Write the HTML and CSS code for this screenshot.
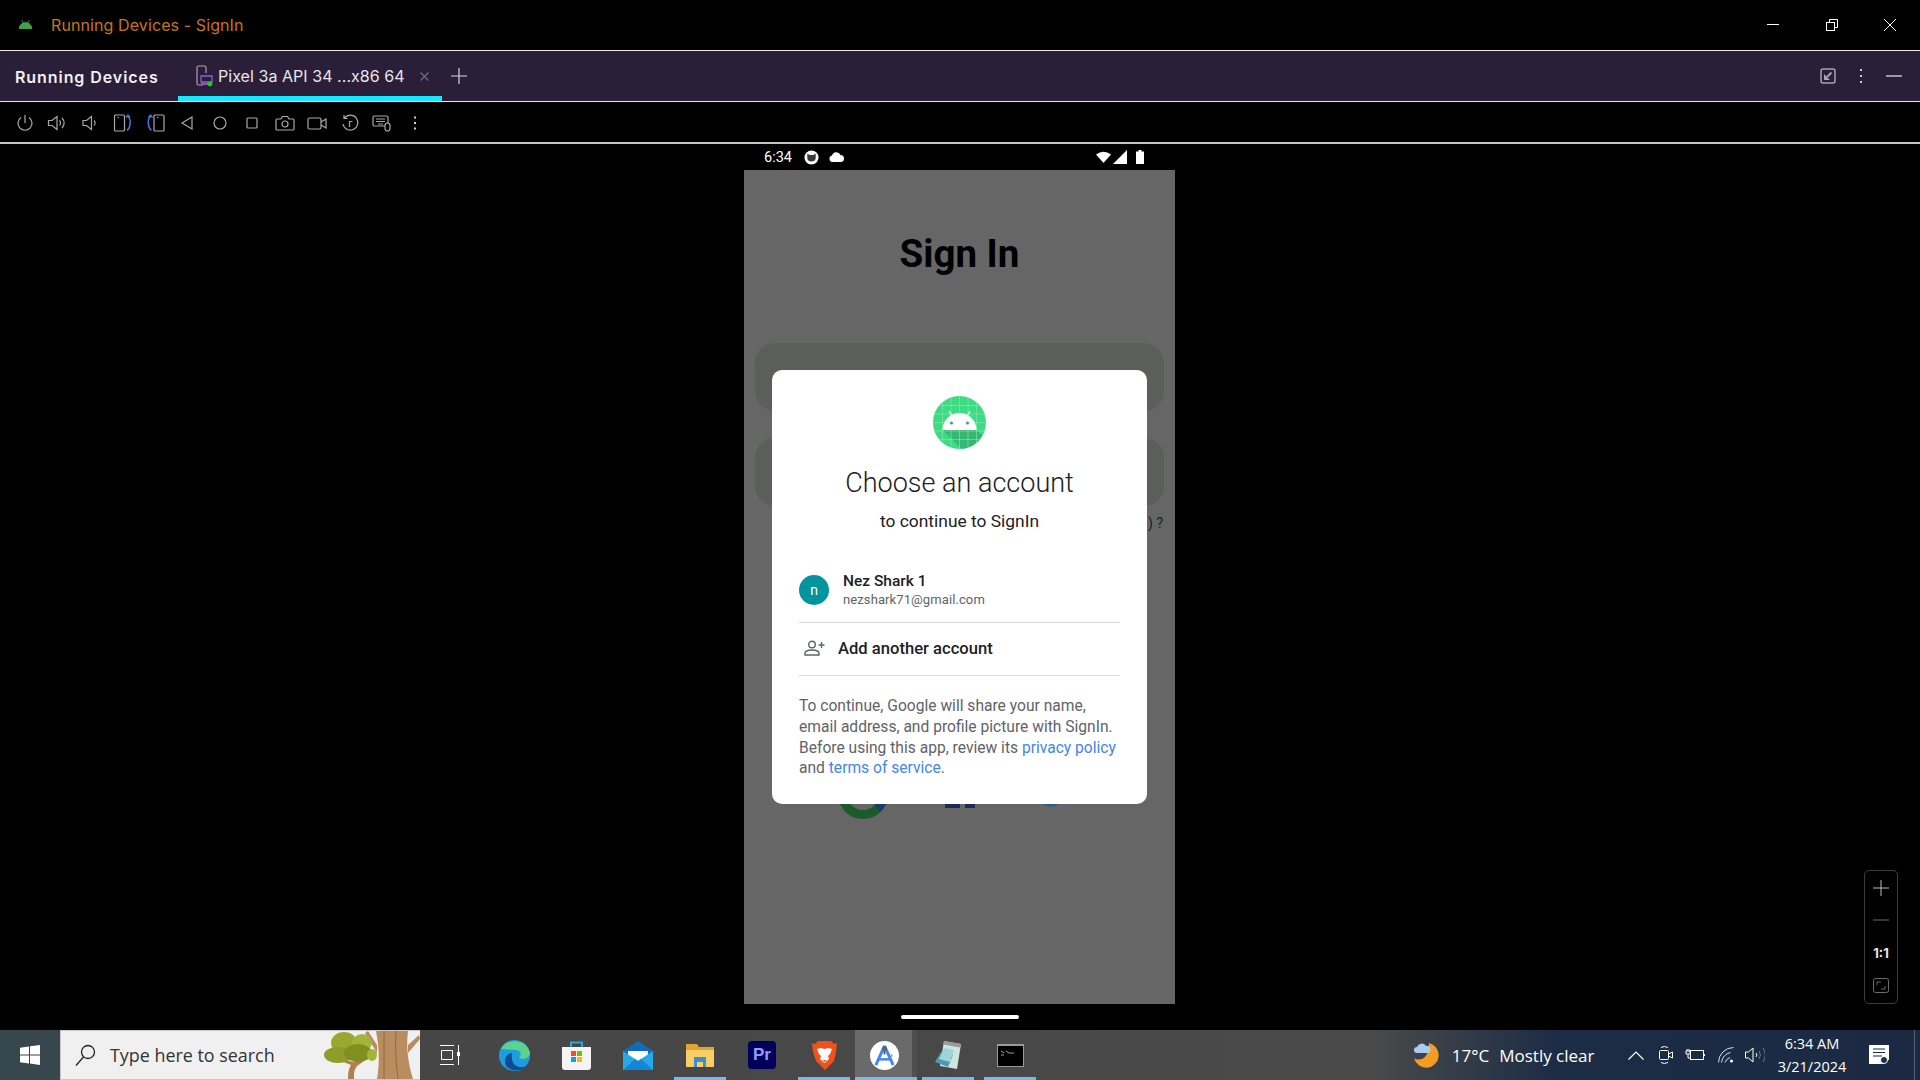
FILE: index.html
```html
<!DOCTYPE html>
<html lang="en">
<head>
  <meta charset="UTF-8">
  <title>Running Devices - SignIn</title>
  <link rel="stylesheet" href="styles.css">
</head>
<body>
  <!-- window title -->
  <header class="titlebar">
    <svg class="droid" width="13" height="9" viewBox="0 0 13 9"><path d="M0 9a6.5 6.5 0 0 1 13 0z M2.5 0l2 3 M10.5 0l-2 3" fill="#3ea447" stroke="#3ea447" stroke-width=".8"/></svg>
    <span class="title-text">Running Devices - SignIn</span>
    <div class="win-btns">
      <svg width="12" height="12" viewBox="0 0 12 12"><path d="M0 5.5h12" stroke="#fff"/></svg>
      <svg width="12" height="12" viewBox="0 0 12 12" fill="none" stroke="#fff"><rect x=".5" y="3.5" width="8" height="8"/><path d="M3.5 3.5v-3h8v8h-3"/></svg>
      <svg width="12" height="12" viewBox="0 0 12 12"><path d="M0 0l12 12M12 0L0 12" stroke="#fff"/></svg>
    </div>
  </header>

  <!-- tool window tabs -->
  <nav class="tabbar">
    <span class="tool-name">Running Devices</span>
    <div class="tab">
      <svg width="17" height="22" viewBox="0 0 17 22" fill="none"><path d="M7 20H2.5A1.5 1.5 0 0 1 1 18.5v-16A1.5 1.5 0 0 1 2.5 1h6A1.5 1.5 0 0 1 10 2.500V8" stroke="#a9a4b2" stroke-width="1.200"/><path d="M5 11h11v6H5z" stroke="#9a5cd0" stroke-width="1.300"/><path d="M5 19h9" stroke="#9a5cd0" stroke-width="1.800"/><circle cx="14" cy="19" r="2.400" fill="#19d11f"/></svg>
      <span class="tab-label">Pixel 3a API 34 ...x86 64</span>
      <svg class="tab-close" width="9" height="9" viewBox="0 0 9 9"><path d="M.5.500l8 8M8.500.500l-8 8" stroke="#77717f" stroke-width="1.100"/></svg>
    </div>
    <svg class="tab-add" width="16" height="16" viewBox="0 0 16 16"><path d="M8 0v16M0 8h16" stroke="#d8d5dc" stroke-width="1.200"/></svg>
    <div class="tab-tools">
      <svg width="16" height="16" viewBox="0 0 16 16" fill="none" stroke="#a8a3ae"><rect x="1" y="1" width="14" height="14" rx="2" stroke-width="1.500"/><path d="M11.500 4.500L7 9" stroke-width="2"/><path d="M4 6v6h6z" fill="#a8a3ae" stroke="none"/></svg>
      <svg width="4" height="16" viewBox="0 0 4 16" fill="#c9c5ce"><rect x="1" y="1" width="2" height="2"/><rect x="1" y="7" width="2" height="2"/><rect x="1" y="13" width="2" height="2"/></svg>
      <svg width="16" height="2" viewBox="0 0 16 2"><path d="M0 1h16" stroke="#9f99a6" stroke-width="2"/></svg>
    </div>
  </nav>

  <!-- emulator toolbar -->
  <div class="toolbar">
    <svg class="tool" viewBox="0 0 20 20"><path d="M10 2v8M6 4.500a7 7 0 1 0 8 0"/></svg>
    <svg class="tool" viewBox="0 0 20 20"><path d="M1.500 7.500h3.500L10 3.500v13l-5-4H1.500zM12.500 7.500a3.500 3.500 0 0 1 0 5M15 5a7 7 0 0 1 0 10"/></svg>
    <svg class="tool" viewBox="0 0 20 20"><path d="M3 7.500h3.500l5-4v13l-5-4H3zM14 7.500a3.500 3.500 0 0 1 0 5"/></svg>
    <svg class="tool" viewBox="0 0 20 20"><rect x="2.500" y="2" width="10" height="16" rx="1"/><path d="M5.500 4.500H7"/><path class="blue" d="M15.500 3a8 8 0 0 1 2.500 8 8 8 0 0 1-3 6.500M14 4.500L16 2l2 2.500"/></svg>
    <svg class="tool" viewBox="0 0 20 20"><rect x="9" y="2" width="10" height="16" rx="1"/><path d="M12 4.500h1.500"/><path class="blue" d="M6 3a8 8 0 0 0-2.500 8 8 8 0 0 0 3 6.500M7.500 4.500L5.500 2l-2 2.500"/></svg>
    <svg class="tool" viewBox="0 0 20 20"><path d="M15 4v12L5 10z"/></svg>
    <svg class="tool" viewBox="0 0 20 20"><circle cx="10" cy="10" r="6"/></svg>
    <svg class="tool" viewBox="0 0 20 20"><rect x="5" y="5" width="10" height="10" rx="1"/></svg>
    <svg class="tool" viewBox="0 0 20 20"><path d="M2 6h4l1.500-2.500h5L14 6h4a1 1 0 0 1 1 1v9a1 1 0 0 1-1 1H2a1 1 0 0 1-1-1V7a1 1 0 0 1 1-1z"/><circle cx="10" cy="11" r="3"/></svg>
    <svg class="tool" viewBox="0 0 20 20"><rect x="1" y="5" width="13" height="11" rx="1.500"/><path d="M14 9l5-3v9l-5-3"/></svg>
    <svg class="tool" viewBox="0 0 20 20"><path d="M4.500 5A7.500 7.500 0 1 1 3 11M4 2v3.500h3.500"/><path d="M12.500 8.500h-3V14"/></svg>
    <svg class="tool" viewBox="0 0 20 20"><rect x="1" y="3" width="15" height="10" rx="1.500"/><path d="M4 6h9M4 8.500h9M6 11h5"/><rect x="13" y="10" width="5" height="8" rx="2.500" fill="#000"/></svg>
    <svg class="tool dots" viewBox="0 0 20 20"><path d="M10 3.500v2M10 9v2M10 14.500v2"/></svg>
  </div>

  <!-- device view -->
  <main class="stage">
    <div class="statusbar">
      <span class="clock">6:34</span>
      <svg class="st-cat" width="15" height="15" viewBox="0 0 15 15"><circle cx="7.500" cy="7.500" r="6.300" fill="#fff" stroke="#fff" stroke-width="1.500"/><path d="M3.300 3.500l2.200 1.500h4l2.200-1.500v4.500c0 2.500-2 3.500-4.200 3.500s-4.200-1-4.200-3.500z" fill="#3a3a3a"/></svg>
      <svg width="15" height="10" viewBox="0 0 15 10"><path d="M3.500 10a3.300 3.300 0 0 1-.500-6.500A4.500 4.500 0 0 1 11.500 3 3.500 3.500 0 0 1 11.500 10z" fill="#fff"/></svg>
      <div class="st-right">
        <svg width="15" height="12" viewBox="0 0 15 12"><path d="M0 3.500Q7.500-2 15 3.500L7.500 12z" fill="#fff"/></svg>
        <svg width="14" height="14" viewBox="0 0 14 14"><path d="M14 0v14H0z" fill="#fff"/></svg>
        <svg width="8" height="14" viewBox="0 0 8 14"><path d="M2.500 0h3v1.500H8V14H0V1.500h2.500z" fill="#fff"/></svg>
      </div>
    </div>

    <div class="screen">
      <h1 class="signin-title">Sign In</h1>
      <div class="field"></div>
      <div class="field"></div>
      <p class="forgot">) ?</p>
      <div class="socials">
        <svg width="50" height="50" viewBox="0 0 50 50" fill="none"><circle cx="25" cy="25" r="20.500" stroke="#1b5a2b" stroke-width="9"/><path d="M39.500 39.500A20.500 20.500 0 0 0 45.500 25" stroke="#1d3a6e" stroke-width="9"/></svg>
        <svg width="30" height="30" viewBox="0 0 30 30" fill="#1c2c59"><rect x="0" width="15" height="30"/><rect x="20" width="10" height="30"/></svg>
        <svg width="28" height="28" viewBox="0 0 28 28"><circle cx="14" cy="14" r="13.500" fill="#2a5e8a"/></svg>
      </div>

      <!-- account picker on top of the page -->
      <section class="dialog">
        <svg class="logo" width="53" height="53" viewBox="0 0 53 53">
          <defs><clipPath id="disc"><circle cx="26.500" cy="26.500" r="26.500"/></clipPath></defs>
          <g clip-path="url(#disc)">
            <rect width="53" height="53" fill="#3ddc84"/>
            <path d="M9.500 34h34L53 43v10H29z" fill="#35b873"/>
            <path d="M9.500 0v53M18 0v53M26.500 0v53M35 0v53M43.500 0v53M0 9.500h53M0 18h53M0 26.500h53M0 35h53M0 43.500h53" stroke="#8beab4" stroke-width=".6"/>
          </g>
          <path d="M9.500 34a17 17 0 0 1 34 0z" fill="#fff"/>
          <path d="M16 15l4 7M37 15l-4 7" stroke="#fff" stroke-width="1.200"/>
          <circle cx="18.500" cy="27" r="1.500" fill="#2fa866"/><circle cx="34.500" cy="27" r="1.500" fill="#2fa866"/>
        </svg>
        <h2 class="dlg-title">Choose an account</h2>
        <p class="dlg-sub">to continue to SignIn</p>
        <div class="account">
          <span class="avatar">n</span>
          <div class="acc-info">
            <span class="acc-name">Nez Shark 1</span>
            <span class="acc-mail">nezshark71@gmail.com</span>
          </div>
        </div>
        <div class="add-row">
          <svg width="21" height="16" viewBox="0 0 21 16" fill="none" stroke="#5f6368" stroke-width="1.400"><circle cx="8" cy="4.500" r="3.300"/><path d="M1 15v-1.500c0-2.500 4-3.500 7-3.500s7 1 7 3.500V15z"/><path d="M17.500 2v6M14.500 5h6"/></svg>
          <span>Add another account</span>
        </div>
        <p class="legal">To continue, Google will share your name, email address, and profile picture with SignIn. Before using this app, review its <a>privacy policy</a> and <a>terms of service</a>.</p>
      </section>
    </div>

    <div class="home-area"><span class="home-pill"></span></div>

    <div class="zoom-ctrl">
      <svg width="16" height="16" viewBox="0 0 16 16"><path d="M8 0v16M0 8h16" stroke="#bdbdbd"/></svg>
      <svg class="zoom-minus" width="16" height="2" viewBox="0 0 16 2"><path d="M0 1h16" stroke="#6c6c6c"/></svg>
      <span class="zoom-one">1:1</span>
      <svg class="zoom-fit" width="16" height="15" viewBox="0 0 16 15" fill="none" stroke="#6b6b6b"><rect x=".5" y=".5" width="15" height="14" rx="2"/><path d="M4 7V4h4M12 8v3H8"/></svg>
    </div>
  </main>

  <!-- windows taskbar -->
  <footer class="taskbar">
    <div class="start">
      <svg width="20" height="20" viewBox="0 0 20 20" fill="#fff"><path d="M0 2.800l9-1.300v8H0zM10 1.300L20 0v9.500H10zM0 10.500h9v8l-9-1.300zM10 10.500h10V20l-10-1.400z"/></svg>
    </div>
    <div class="search">
      <svg width="21" height="23" viewBox="0 0 21 23" fill="none" stroke="#222" stroke-width="1.300"><circle cx="13" cy="8" r="6.500"/><path d="M8.500 13L1 21.500"/></svg>
      <span class="search-text">Type here to search</span>
      <svg class="search-art" width="96" height="48" viewBox="0 0 96 48">
        <path d="M24 48c0-8 1-10 3-14L12 28l1-2 16 5 8-5 6 2-10 7c-3 4-3 7-3 13z" fill="#b08050"/>
        <path d="M52 0h32c-2 16 0 32 5 48H53c3-16 2-32-1-48z" fill="#b98d5f"/>
        <path d="M44 0l9 14v8L41 2zM96 8L84 22v-8l11-10z" fill="#b98d5f"/>
        <path d="M60 0v48M72 0c-1 16 0 32 2 48" stroke="#96693f" fill="none"/>
        <ellipse cx="20" cy="12" rx="13" ry="11" fill="#9aa832"/>
        <ellipse cx="38" cy="12" rx="10" ry="9" fill="#a3b43a"/>
        <ellipse cx="14" cy="24" rx="14" ry="8" fill="#8e9d28"/>
        <ellipse cx="34" cy="22" rx="14" ry="9" fill="#7f8f20"/>
        <ellipse cx="48" cy="24" rx="5" ry="6" fill="#a5b43a"/>
      </svg>
    </div>
    <div class="task-view">
      <svg width="20" height="20" viewBox="0 0 20 20" fill="none" stroke="#fff"><path d="M0 .500h14M0 19.500h14M1.500 5.500h11v9h-11zM18.500 0v7M18.500 11v9"/><rect x="17" y="7" width="3" height="4" fill="#fff" stroke="none"/></svg>
    </div>
    <div class="app">
      <svg width="31" height="31" viewBox="0 0 31 31"><circle cx="15.500" cy="15.500" r="15.500" fill="#1b9de2"/><path d="M2 9C7-2 28-2 31 13c0 5-7 7-11 5 3-3 2-8-4-8C10 10 5 9 2 9z" fill="#5cd38b"/><path d="M13 13c-7 1-9 9-5 14 6 5 15 4 20-1-8 3-17 0-15-13z" fill="#134b92"/></svg>
    </div>
    <div class="app">
      <svg width="29" height="30" viewBox="0 0 29 30"><path d="M9 7V2.500h11V7" fill="none" stroke="#2aa5e5" stroke-width="2"/><path d="M0 7h29v20a3 3 0 0 1-3 3H3a3 3 0 0 1-3-3z" fill="#f4f4f4"/><rect x="9" y="11" width="5" height="5" fill="#f25022"/><rect x="15" y="11" width="5" height="5" fill="#7fba00"/><rect x="9" y="17" width="5" height="5" fill="#00a4ef"/><rect x="15" y="17" width="5" height="5" fill="#ffb900"/></svg>
    </div>
    <div class="app">
      <svg width="30" height="29" viewBox="0 0 30 29"><path d="M0 10L15 0l15 10v19H0z" fill="#0f6cbd"/><path d="M5 10h20v6l-10 6-10-6z" fill="#fff"/><path d="M0 10l15 10 15-10v19H0z" fill="#27a9e8"/><path d="M0 29l12-11 3 2 3-2 12 11z" fill="#1487d2"/></svg>
    </div>
    <div class="app open">
      <svg width="28" height="24" viewBox="0 0 28 24"><path d="M0 1h11l2 3h15v19H0z" fill="#e0a530"/><path d="M0 7h28v16a1 1 0 0 1-1 1H1a1 1 0 0 1-1-1z" fill="#f8cf66"/><path d="M8 14h12v10h-3v-5h-6v5H8z" fill="#3f8ed4"/></svg>
    </div>
    <div class="app">
      <span class="pr-icon">Pr</span>
    </div>
    <div class="app open">
      <svg width="25" height="29" viewBox="0 0 25 29"><path d="M6 0h13l3 3 3-1-1 9-2 9-9 9-9-9-3-9-1-9 3 1z" fill="#f1511b"/><path d="M5 8l4-1 3.500 1L16 7l4 1-2 5-2 2 1 3-4.500 4L8 18l1-3-2-2z" fill="#fff"/><path d="M10.500 19h4l-2 2z" fill="#f1511b"/></svg>
    </div>
    <div class="app studio open">
      <svg width="29" height="29" viewBox="0 0 30 30" fill="none"><circle cx="15" cy="15" r="15" fill="#fff"/><path d="M15 5L6 25M15 5l9 20" stroke="#4285f4" stroke-width="3"/><path d="M9 19h12" stroke="#4285f4" stroke-width="2.500"/><path d="M15 5v9" stroke="#5f6368" stroke-width="2"/><circle cx="15" cy="8" r="2.500" fill="#5f6368"/><path d="M21 13l3 2-2 2z" fill="#3ddc84"/></svg>
    </div>
    <div class="app open">
      <svg width="26" height="28" viewBox="0 0 26 28"><path d="M9 0l17 3-4 25L5 25z" fill="#cfe5df"/><path d="M9 0l17 3-.6 3.500L8.300 3.500z" fill="#9a9a9a"/><path d="M6 11l12 3-5 12-13-5z" fill="#4c9bb0"/><path d="M9 7l10 2-4 12L4 18z" fill="#9ed5d8"/></svg>
    </div>
    <div class="app open">
      <div class="term-icon"><svg width="14" height="8" viewBox="0 0 14 8" fill="none" stroke="#ccc" stroke-width=".8"><path d="M0 1l3 2M5 1l3 2 5 0M0 5h3"/></svg></div>
    </div>

    <div class="tray">
      <svg class="weather" width="28" height="26" viewBox="0 0 28 26"><path d="M16 1a12.500 12.500 0 1 1-15 15c6 4 15 1 15-15z" fill="#f39c1f"/><path d="M4 11a3 3 0 0 1 0-6 5 5 0 0 1 9-1 3.500 3.500 0 0 1 2 7z" fill="#a9cdee"/></svg>
      <span class="temp">17°C</span>
      <span class="cond">Mostly clear</span>
      <svg class="chev" width="16" height="9" viewBox="0 0 16 9" fill="none" stroke="#fff" stroke-width="1.200"><path d="M.5 8.500L8 1l7.500 7.500"/></svg>
      <svg class="tr-meet" width="14" height="20" viewBox="0 0 14 20" fill="none" stroke="#fff"><path d="M2 2.500Q5 .500 9 2.500M2 17.500q3 2 7 0"/><rect x=".5" y="5.500" width="9" height="9" rx="1"/><path d="M9.500 9l4-2v6l-4-2"/></svg>
      <svg class="tr-batt" width="20" height="14" viewBox="0 0 20 14" fill="none" stroke="#fff"><rect x="5.500" y="2.500" width="13" height="9" /><path d="M19.500 6v2M2 1v2M4 1v2M1 3h4v3H1zM3 6v4h3"/></svg>
      <svg class="tr-wifi" width="16" height="16" viewBox="0 0 16 16" fill="none" stroke="#ddd"><path d="M.500 15.500a15 15 0 0 1 15-15M3.500 15.500a12 12 0 0 1 9-10M7 15.500a8 8 0 0 1 5-5"/><circle cx="13.500" cy="14" r="1.500" fill="#fff" stroke="none"/></svg>
      <svg class="tr-vol" width="20" height="16" viewBox="0 0 20 16" fill="none" stroke="#fff"><path d="M.500 5h3L8 1v14l-4.500-4H.500zM11 6a3 3 0 0 1 0 4"/><path d="M14 4a7 7 0 0 1 0 8M18 1a12 12 0 0 1 0 14" stroke="#777"/></svg>
      <div class="datetime"><span>6:34 AM</span><span>3/21/2024</span></div>
      <svg class="notif" width="20" height="20" viewBox="0 0 20 20"><path d="M0 0h20v15h-4l-2 4H0z" fill="#fff"/><path d="M4 4h12M4 7.500h12M4 11h9" stroke="#1c2b44" stroke-width="1.200"/><circle cx="15" cy="15" r="3.500" fill="#1c2b44" stroke="#fff"/></svg>
      <span class="show-desktop"></span>
    </div>
  </footer>
</body>
</html>
```

FILE: styles.css
```css
* {
  box-sizing: border-box;
}
body {
  margin: 0;
  width: 1920px;
  height: 1080px;
  overflow: hidden;
  display: flex;
  flex-direction: column;
  background-color: #000;
  font-family: Inter, sans-serif;
  color: #fff;
}
svg {
  display: block;
  flex-shrink: 0;
}

/* title bar */
.titlebar {
  height: 51px;
  display: flex;
  align-items: center;
  padding-left: 19px;
  padding-bottom: 1px;
  border-bottom: 1px solid #e8e8e8;
}
.title-text {
  margin-left: 19px;
  font-size: 16px;
  color: #c9741a;
  letter-spacing: 0.1px;
}
.win-btns {
  margin-left: auto;
  margin-right: 24px;
  display: flex;
  gap: 46.500px;
}

/* tabs */
.tabbar {
  height: 51px;
  display: flex;
  align-items: center;
  padding-left: 15px;
  background-color: #2b1e38;
  border-bottom: 1px solid #e8e8e8;
}
.tool-name {
  width: 163px;
  margin-top: 2px;
  font-size: 16px;
  font-weight: 600;
  letter-spacing: 0.93px;
  color: #f2f0f4;
}
.tab {
  width: 264px;
  height: 50px;
  display: flex;
  align-items: center;
  padding-left: 18px;
  padding-top: 5px;
  border-bottom: 5px solid #18e6ff;
}
.tab-label {
  margin-left: 5px;
  font-size: 16px;
  letter-spacing: 0.05px;
  color: #e8e5ec;
}
.tab-close {
  margin-left: 15px;
}
.tab-add {
  margin-left: 9px;
  margin-top: 0;
}
.tab-tools {
  margin-left: auto;
  margin-right: 18px;
  display: flex;
  align-items: center;
  gap: 23px;
}

/* emulator toolbar */
.toolbar {
  height: 42px;
  display: flex;
  align-items: center;
  gap: 12.5px;
  padding-left: 14.5px;
  padding-top: 2px;
  border-bottom: 2px solid #c4c4c4;
}
.tool {
  width: 20px;
  height: 20px;
  fill: none;
  stroke: #a9a9a9;
  stroke-width: 1.2;
}
.tool .blue {
  stroke: #3f7fe0;
  stroke-width: 1.4;
}
.tool.dots {
  stroke: #cfcfcf;
  stroke-width: 2;
}

/* device */
.stage {
  position: relative;
  flex: 1;
  display: flex;
  flex-direction: column;
  align-items: center;
  padding-right: 1px;
}
.statusbar {
  width: 431px;
  height: 26px;
  display: flex;
  align-items: center;
  gap: 10px;
  padding: 0 31px 0 20px;
  font-family: Roboto, sans-serif;
}
.clock {
  font-size: 14.500px;
  margin-right: 2px;
}
.st-right {
  margin-left: auto;
  display: flex;
  align-items: center;
  gap: 2px;
}
.st-right svg:last-child {
  margin-left: 7px;
}
.screen {
  position: relative;
  width: 431px;
  height: 834px;
  padding: 0 11px;
  background-color: #666;
  display: flex;
  flex-direction: column;
  align-items: center;
  font-family: Roboto, sans-serif;
}
.signin-title {
  margin: 61px 0 66px;
  height: 46px;
  line-height: 46px;
  font-size: 38.500px;
  font-weight: 700;
  color: #000;
}
.field {
  width: 100%;
  height: 68px;
  margin-bottom: 27px;
  flex-shrink: 0;
  border-radius: 20px;
  background-color: #5c5e5c;
}
.forgot {
  width: 100%;
  margin: -19px 0 0;
  text-align: right;
  padding-right: 1px;
  font-size: 14px;
  line-height: 18px;
  color: #1c1c1c;
}
.socials {
  width: 100%;
  display: flex;
  align-items: flex-end;
  margin-top: 237px;
  padding-left: 83px;
}
.socials svg:nth-child(2) {
  margin: 0 0 11px 57px;
}
.socials svg:nth-child(3) {
  margin: 0 0 12px 62px;
}

/* account dialog */
.dialog {
  position: absolute;
  top: 200px;
  left: 28px;
  width: 375px;
  height: 434px;
  padding: 26px 27px 0;
  background-color: #fff;
  border-radius: 10px;
  display: flex;
  flex-direction: column;
  color: #202124;
}
.logo {
  align-self: center;
}
.dlg-title {
  margin: 15px 0 0;
  height: 38px;
  line-height: 38px;
  text-align: center;
  font-size: 27px;
  font-weight: 300;
}
.dlg-sub {
  margin: 7px 0 0;
  height: 24px;
  line-height: 24px;
  text-align: center;
  font-size: 17.400px;
}
.account {
  margin-top: 33px;
  height: 57px;
  flex-shrink: 0;
  display: flex;
  align-items: center;
  gap: 14px;
  padding-bottom: 8px;
  border-bottom: 1px solid #dadce0;
}
.avatar {
  width: 30px;
  height: 30px;
  border-radius: 50%;
  background-color: #00949f;
  color: #fff;
  display: flex;
  align-items: center;
  justify-content: center;
  font-size: 14px;
}
.acc-info {
  display: flex;
  flex-direction: column;
}
.acc-name {
  font-size: 15.500px;
  font-weight: 500;
  line-height: 20px;
}
.acc-mail {
  font-size: 13px;
  line-height: 18px;
  color: #5f6368;
  letter-spacing: 0.1px;
}
.add-row {
  height: 53px;
  flex-shrink: 0;
  display: flex;
  align-items: center;
  gap: 13px;
  padding-left: 5px;
  padding-bottom: 2px;
  font-size: 16.600px;
  font-weight: 500;
  border-bottom: 1px solid #dadce0;
}
.legal {
  margin: 20px 0 0;
  font-size: 15.600px;
  line-height: 20.800px;
  color: #5f6368;
}
.legal a {
  color: #4285f4;
}
.home-area {
  flex: 1;
  display: flex;
  align-items: center;
  justify-content: center;
}
.home-pill {
  width: 118px;
  height: 4px;
  border-radius: 2px;
  background-color: #fff;
}
.zoom-ctrl {
  position: absolute;
  top: 726px;
  right: 22px;
  width: 34px;
  height: 134px;
  padding-top: 9px;
  border: 1px solid #3c3c3c;
  border-radius: 5px;
  display: flex;
  flex-direction: column;
  align-items: center;
}
.zoom-minus {
  margin-top: 23px;
}
.zoom-one {
  margin-top: 24px;
  font-size: 13px;
  line-height: 16px;
  font-weight: 700;
  color: #e6e6e6;
}
.zoom-fit {
  margin-top: 17px;
}

/* taskbar */
.taskbar {
  height: 50px;
  flex-shrink: 0;
  display: flex;
  align-items: stretch;
  background: linear-gradient(90deg, #36474e 0, #464646 420px, #4a4a4a 1370px, #1c2c45 1560px, #1b2a42 100%);
}
.start {
  width: 60px;
  display: flex;
  align-items: center;
  justify-content: center;
}
.search {
  width: 360px;
  display: flex;
  align-items: center;
  padding-left: 14px;
  background-color: #f0f0f0;
  border: 1px solid #c8c8c8;
  border-right: none;
  overflow: hidden;
}
.search-text {
  margin-left: 14px;
  font-family: "Open Sans", sans-serif;
  font-size: 17.900px;
  color: #333;
}
.search-art {
  margin-left: auto;
}
.task-view {
  width: 63px;
  padding-right: 3px;
  display: flex;
  align-items: center;
  justify-content: center;
}
.app {
  position: relative;
  width: 62px;
  display: flex;
  align-items: center;
  justify-content: center;
}
.app.open::after {
  content: "";
  position: absolute;
  left: 5px;
  right: 5px;
  bottom: 0;
  height: 3px;
  background-color: #76b9ed;
}
.studio {
  padding-left: 2px;
  background-color: #6a6a6a;
  border-right: 5px solid #4f4f4f;
}
.studio.open::after {
  left: 0;
  right: -5px;
}
.pr-icon {
  width: 28px;
  height: 28px;
  border-radius: 4px;
  background-color: #00005b;
  color: #9999ff;
  font-family: "Liberation Sans", sans-serif;
  font-weight: 700;
  font-size: 17px;
  line-height: 28px;
  text-align: center;
}
.term-icon {
  width: 27px;
  height: 23px;
  padding: 4px 3px;
  background-color: #000;
  border: 1px solid #9a9a9a;
  border-top-width: 2px;
}
.tray {
  margin-left: auto;
  display: flex;
  align-items: center;
  font-family: "Open Sans", sans-serif;
  color: #fff;
}
.temp {
  margin-left: 10.500px;
  font-size: 17px;
}
.cond {
  margin-left: 10px;
  margin-right: 33.500px;
  font-size: 17px;
}
.tr-meet {
  margin-left: 15px;
}
.tr-batt {
  margin-left: 12px;
}
.tr-wifi {
  margin-left: 13px;
}
.tr-vol {
  margin-left: 11px;
}
.datetime {
  width: 94px;
  display: flex;
  flex-direction: column;
  align-items: center;
  font-size: 14.500px;
  line-height: 23px;
}
.notif {
  margin-left: 10px;
}
.show-desktop {
  width: 6px;
  height: 100%;
  margin-left: 25px;
  border-left: 1px solid #566070;
}
```
